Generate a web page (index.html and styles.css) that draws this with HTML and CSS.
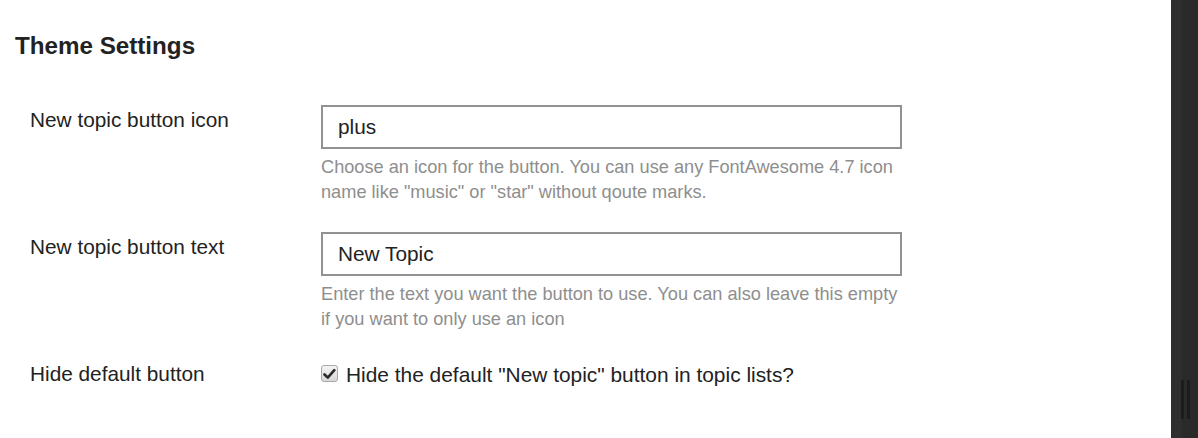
FILE: index.html
```html
<!DOCTYPE html>
<html lang="en">
<head>
<meta charset="utf-8">
<title>Theme Settings</title>
<link rel="stylesheet" href="styles.css">
</head>
<body>
<div class="layout">
  <main class="main">
    <h3 class="title">Theme Settings</h3>
    <form class="settings">
      <div class="row">
        <label class="label" for="icon">New topic button icon</label>
        <div class="control">
          <input class="field" id="icon" type="text" value="plus">
          <p class="help">Choose an icon for the button. You can use any FontAwesome 4.7 icon name like "music" or "star" without qoute marks.</p>
        </div>
      </div>
      <div class="row">
        <label class="label" for="text">New topic button text</label>
        <div class="control">
          <input class="field" id="text" type="text" value="New Topic">
          <p class="help">Enter the text you want the button to use. You can also leave this empty if you want to only use an icon</p>
        </div>
      </div>
      <div class="row">
        <span class="label">Hide default button</span>
        <div class="control">
          <label class="check">
            <span class="box"><svg width="13" height="12" viewBox="0 0 13 12"><path d="M1.5 6.5 L4.8 9.6 L11.3 2.2" fill="none" stroke="#2a2a2a" stroke-width="2.6" stroke-linecap="round" stroke-linejoin="round"/></svg></span>
            <span class="check-text">Hide the default "New topic" button in topic lists?</span>
          </label>
        </div>
      </div>
    </form>
  </main>
  <aside class="sidebar">
    <div class="grip"><span class="grip-line"></span><span class="grip-line"></span></div>
  </aside>
</div>
</body>
</html>
```
FILE: styles.css
```css
html, body {
  margin: 0;
  padding: 0;
  background: #fff;
  height: 100%;
}
body {
  font-family: "Liberation Sans", Arial, sans-serif;
  color: #222;
  overflow: hidden;
}
.layout {
  display: flex;
  height: 438px;
}
.main {
  flex: 1;
  padding: 0 0 0 15px;
}
.title {
  margin: 32px 0 0;
  font-size: 24.2px;
  line-height: 28px;
  font-weight: bold;
  color: #222;
}
.settings {
  padding: 45px 0 0 15px;
  display: flex;
  flex-direction: column;
  gap: 27px;
}
.row {
  display: grid;
  grid-template-columns: 291px 581px;
  align-items: start;
}
.label {
  font-size: 20.8px;
  line-height: 29px;
  color: #222;
}
.control {
  display: flex;
  flex-direction: column;
}
.field {
  box-sizing: border-box;
  width: 581px;
  height: 44px;
  margin: 0;
  border: 2px solid #919191;
  border-radius: 0;
  padding: 0 0 0 15px;
  font-family: inherit;
  font-size: 20.8px;
  color: #222;
  background: #fff;
  outline: none;
}
.help {
  margin: 6px 0 0;
  font-size: 18.2px;
  line-height: 25px;
  color: #8e8e8e;
}
.check {
  display: flex;
  align-items: center;
  gap: 8px;
  padding-top: 1px;
}
.box {
  box-sizing: border-box;
  width: 17px;
  height: 17px;
  border: 1px solid #a9a9a9;
  border-radius: 3px;
  background: linear-gradient(#f4f4f4, #d8d8d8);
  display: flex;
  align-items: center;
  justify-content: center;
}
.check-text {
  font-size: 20.9px;
  line-height: 24px;
  padding-top: 3px;
  color: #222;
}
.sidebar {
  width: 27px;
  background: linear-gradient(90deg, #2e2e2e 0, #2e2e2e 11px, #2a2a2a 11px);
  display: flex;
  flex-direction: column;
  justify-content: flex-end;
  padding-bottom: 19px;
  box-sizing: border-box;
}
.grip {
  display: flex;
  gap: 3px;
  padding-left: 10px;
  height: 39px;
}
.grip-line {
  width: 3px;
  height: 100%;
  background: #1c1c1c;
  border-radius: 1px;
}
```
